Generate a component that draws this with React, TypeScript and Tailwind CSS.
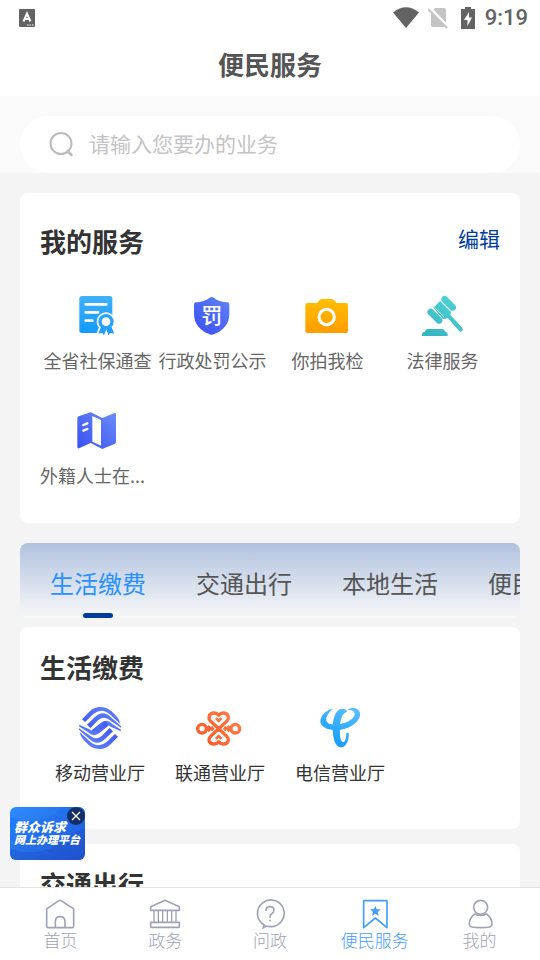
import { useState } from "react";
import type { ReactNode } from "react";

type Item = { label: string; icon: ReactNode };

const tile = "size-12 shrink-0";

const DocIcon = () => (
  <svg viewBox="0 0 144 144" className={tile}>
    <defs>
      <linearGradient id="doc" x1="0" y1="0" x2="0" y2="1">
        <stop offset="0" stopColor="#3fb0fc" />
        <stop offset="1" stopColor="#129bff" />
      </linearGradient>
    </defs>
    <rect x="16" y="12" width="99" height="111" rx="8" fill="url(#doc)" />
    <path
      d="M35 37H97M35 61H72M35 86H55"
      stroke="#fff"
      strokeWidth="8"
      strokeLinecap="round"
    />
    <circle cx="96" cy="89" r="28" fill="#fff" />
    <path d="M67 126L78 98H115L126 128Z" fill="#fff" />
    <path
      d="M82 102L73 125L84 122L90 130L97 112L103 130L109 122L121 125L111 102Z"
      fill="#1f9ffb"
    />
    <circle cx="96" cy="89" r="23" fill="#26a4fc" />
    <circle cx="96" cy="89" r="13" fill="#fff" />
  </svg>
);

const ShieldIcon = () => (
  <svg viewBox="0 0 144 144" className={tile}>
    <defs>
      <linearGradient id="shield" x1="1" y1="0" x2="0.2" y2="1">
        <stop offset="0" stopColor="#6284f8" />
        <stop offset="1" stopColor="#3b51f0" />
      </linearGradient>
    </defs>
    <path
      d="M62 17Q68 13 74 17Q91 30 115 31Q121 31 121 38V66Q121 108 74 127Q68 130 62 127Q15 108 15 66V38Q15 31 21 31Q45 30 62 17Z"
      fill="url(#shield)"
    />
    <text
      x="68"
      y="94"
      textAnchor="middle"
      fontSize="63"
      fontWeight="500"
      fill="#fff"
    >
      罚
    </text>
  </svg>
);

const CameraIcon = () => (
  <svg viewBox="0 0 144 144" className={tile}>
    <defs>
      <linearGradient id="camera" x1="0" y1="0" x2="0" y2="1">
        <stop offset="0" stopColor="#ffbf00" />
        <stop offset="1" stopColor="#ff9c00" />
      </linearGradient>
    </defs>
    <path
      d="M10 33H39L48 23Q50 21 53 21H84Q87 21 89 23L98 33H126Q132 33 132 39V117Q132 123 126 123H10Q4 123 4 117V39Q4 33 10 33Z"
      fill="url(#camera)"
    />
    <circle cx="68" cy="75" r="23" fill="none" stroke="#fff" strokeWidth="9" />
  </svg>
);

const GavelIcon = () => (
  <svg viewBox="0 0 144 144" className={tile}>
    <defs>
      <linearGradient id="gavel" gradientUnits="userSpaceOnUse" x1="100" y1="10" x2="30" y2="130">
        <stop offset="0" stopColor="#4fd3d4" />
        <stop offset="1" stopColor="#36b5c2" />
      </linearGradient>
    </defs>
    <g fill="none" stroke="url(#gavel)" strokeLinecap="round">
      <path d="M77 22L101 46M35 60L60 85" strokeWidth="20" />
      <path d="M80 62L125 112" strokeWidth="13" />
    </g>
    <path
      d="M43 47L64 26L95 57Q97 68 89 76Q81 83 71 80Z"
      fill="url(#gavel)"
    />
    <path d="M47 46L75 75M65 28L93 56" stroke="#fff" strokeWidth="2" />
    <path
      d="M9 132V126Q10 120 17 119L21 113Q23 111 26 111H70Q73 111 75 113L79 119Q86 120 86 126V132Z"
      fill="url(#gavel)"
    />
  </svg>
);

const MapIcon = () => (
  <svg viewBox="0 0 144 144" className={tile}>
    <defs>
      <linearGradient id="map" x1="1" y1="0" x2="0" y2="1">
        <stop offset="0" stopColor="#6a8cfa" />
        <stop offset="1" stopColor="#3a4ff0" />
      </linearGradient>
    </defs>
    <path
      d="M14 28L50 16L85 33L122 18Q126 17 126 22V105Q126 108 123 110L85 126L50 108L15 124Q10 125 10 120V33Q10 30 14 28Z"
      fill="url(#map)"
    />
    <path d="M55 27L81 39V116L55 104Z" fill="#fff" />
    <path
      d="M28 54L40 49M28 71L40 66"
      stroke="#fff"
      strokeWidth="7"
      strokeLinecap="round"
    />
  </svg>
);

const MobileIcon = () => (
  <svg viewBox="0 0 144 144" className={tile}>
    <defs>
      <linearGradient id="mobile" x1="1" y1="0" x2="0" y2="1">
        <stop offset="0" stopColor="#6488fb" />
        <stop offset="1" stopColor="#4054f5" />
      </linearGradient>
      <g id="wave">
        <path d="M18 46L40 23Q54 9 72 9Q92 9 107 22L124 40Q131 49 133 60L104 33Q90 20 76 20Q62 21 52 30L27 54Z" />
        <path d="M33 62L56 40Q68 28 81 28Q93 28 104 39L135 67V71L104 50Q92 40 82 41Q74 42 66 49L43 72Z" />
        <path d="M47 79L74 57Q84 49 94 51Q101 52 108 59L135 77L134 82L106 69Q98 63 91 64Q86 65 80 71L57 92Q52 88 47 79Z" />
      </g>
    </defs>
    <g fill="url(#mobile)">
      <use href="#wave" />
      <use href="#wave" transform="rotate(180 72 72)" />
    </g>
  </svg>
);

const UnicomIcon = () => (
  <svg viewBox="0 0 144 144" className={tile}>
    <defs>
      <linearGradient id="unicom" gradientUnits="userSpaceOnUse" x1="130" y1="20" x2="10" y2="120">
        <stop offset="0" stopColor="#ff8045" />
        <stop offset="1" stopColor="#fc5728" />
      </linearGradient>
    </defs>
    <g fill="none" stroke="url(#unicom)" strokeWidth="10" strokeLinejoin="round">
      <path d="M68 34Q62 26 52 27Q40 29 39 39Q38 46 44 52L92 97Q98 103 97 109Q95 119 84 120Q74 121 68 113Q62 121 52 120Q41 119 39 109Q38 103 44 97L92 52Q98 46 97 39Q96 29 84 27Q74 26 68 34Z" />
      <circle cx="18" cy="74" r="13" />
      <circle cx="118" cy="74" r="13" />
    </g>
    <g fill="url(#unicom)">
      <path d="M57 45L62 40L68 45L74 40L79 45L68 56Z" />
      <path d="M57 102L62 107L68 102L74 107L79 102L68 91Z" />
      <path d="M28 74L38 63L44 69L49 66L55 74L49 82L44 79L38 85Z" />
      <path d="M108 74L98 63L92 69L87 66L81 74L87 82L92 79L98 85Z" />
    </g>
  </svg>
);

const TelecomIcon = () => (
  <svg viewBox="0 0 144 144" className={tile}>
    <defs>
      <linearGradient id="telecom" gradientUnits="userSpaceOnUse" x1="110" y1="10" x2="50" y2="130">
        <stop offset="0" stopColor="#5abfff" />
        <stop offset="1" stopColor="#129bff" />
      </linearGradient>
    </defs>
    <g fill="url(#telecom)">
      <path d="M50 14C26 19 9 40 14 58C22 79 62 84 96 71C128 58 141 30 127 18C119 11 103 10 95 18C107 17 116 21 116 30C115 44 96 56 70 61C46 64 33 59 31 49C29 38 38 26 50 14Z" />
      <path d="M94 23C89 13 76 11 65 20C52 33 48 63 51 91C54 118 64 131 76 130C91 128 100 108 98 86H91C91 103 87 114 81 114C74 113 71 98 72 75C72 46 78 26 94 23Z" />
    </g>
  </svg>
);

const navIcon = "size-8";

const navItems: Item[] = [
  {
    label: "首页",
    icon: (
      <svg viewBox="0 0 96 96" className={navIcon} fill="none" stroke="currentColor" strokeWidth="5" strokeLinejoin="round">
        <path d="M8 35Q8 32 10 31L45 8Q48 6 51 8L87 31Q89 32 89 35V85Q89 89 85 89H12Q8 89 8 85Z" />
        <path d="M34 89V71Q34 56 48 56Q63 56 63 71V89" />
      </svg>
    ),
  },
  {
    label: "政务",
    icon: (
      <svg viewBox="0 0 96 96" className={navIcon} fill="none" stroke="currentColor" strokeWidth="5" strokeLinejoin="round">
        <path d="M5 37V26L48 7L91 26V37ZM5 73H91V88H5Z" />
        <path d="M15 37V73M28 37V73M41 37V73M55 37V73M68 37V73M81 37V73" strokeWidth="4" />
      </svg>
    ),
  },
  {
    label: "问政",
    icon: (
      <svg viewBox="0 0 96 96" className={navIcon} fill="none" stroke="currentColor" strokeWidth="5" strokeLinejoin="round" strokeLinecap="round">
        <path d="M31 81A40 40 0 1 1 48 86L36 84L27 90Z" />
        <path d="M36 37Q36 26 48 26Q60 26 60 37Q60 43 53 47Q48 50 48 56V58M48 67V68" />
      </svg>
    ),
  },
  {
    label: "便民服务",
    icon: (
      <svg viewBox="0 0 96 96" className={navIcon} fill="none" stroke="currentColor" strokeWidth="5" strokeLinejoin="round">
        <path d="M14 8H84V89L49 60L14 89Z" />
        <path
          d="M49 23L53 34H65L56 42L59 54L49 47L39 54L42 42L33 34H45Z"
          fill="currentColor"
          stroke="none"
        />
      </svg>
    ),
  },
  {
    label: "我的",
    icon: (
      <svg viewBox="0 0 96 96" className={navIcon} fill="none" stroke="currentColor" strokeWidth="5" strokeLinejoin="round">
        <circle cx="50" cy="28" r="21" />
        <path d="M33 48Q16 58 16 80Q16 89 50 89Q84 89 84 80Q84 58 67 48Q50 57 33 48Z" />
      </svg>
    ),
  },
];

const myServices: Item[] = [
  { label: "全省社保通查", icon: <DocIcon /> },
  { label: "行政处罚公示", icon: <ShieldIcon /> },
  { label: "你拍我检", icon: <CameraIcon /> },
  { label: "法律服务", icon: <GavelIcon /> },
  { label: "外籍人士在...", icon: <MapIcon /> },
];

const payments: Item[] = [
  { label: "移动营业厅", icon: <MobileIcon /> },
  { label: "联通营业厅", icon: <UnicomIcon /> },
  { label: "电信营业厅", icon: <TelecomIcon /> },
];

const tabs = ["生活缴费", "交通出行", "本地生活", "便民服务"];

const StatusBar = () => (
  <div className="flex h-9 items-center justify-between pl-[19px] pr-3 text-[#636363]">
    <svg viewBox="0 0 16 18" className="h-[18px] w-4">
      <rect width="16" height="18" rx="1" fill="currentColor" />
      <path
        d="M4.500 12.500L8 4.500L11.500 12.500M6 10H10"
        fill="none"
        stroke="#fff"
        strokeWidth="2"
      />
      <path d="M8 16H15" stroke="#fff" strokeWidth="1" strokeDasharray="1.500 1" />
    </svg>
    <div className="flex items-center">
      <svg viewBox="0 0 26 22" className="mr-[9px] h-[22px] w-[26px]">
        <path d="M0 5.500Q13-5 26 5.500L13 21Z" fill="currentColor" />
      </svg>
      <svg viewBox="0 0 20 22" className="mr-[13px] h-[22px] w-5">
        <path d="M7 1H16Q18 1 18 3V18Q18 20 16 20H5Q3 20 3 18V5Z" fill="#c4c4c4" />
        <path d="M1 0L20 20" stroke="#fff" strokeWidth="3" />
        <path d="M0 2L19 21" stroke="#c4c4c4" strokeWidth="2" />
      </svg>
      <svg viewBox="0 0 14 22" className="mr-2.5 h-[22px] w-3.5">
        <path d="M4 0H10V2H14V22H0V2H4Z" fill="currentColor" />
        <path d="M8 5L3 13H6.500V19L11 10.500H8Z" fill="#fff" />
      </svg>
      <span className="font-['Roboto',sans-serif] text-[22px] font-medium leading-9">
        9:19
      </span>
    </div>
  </div>
);

export default function App() {
  const [activeTab, setActiveTab] = useState(tabs[0]);
  const [showBanner, setShowBanner] = useState(true);

  return (
    <div className="relative flex h-screen flex-col overflow-hidden bg-[#f4f4f4] font-['Noto_Sans_CJK_SC',sans-serif] text-[#333]">
      <header className="shrink-0 bg-white">
        <StatusBar />
        <h1 className="h-15 text-center text-[26px] font-bold leading-14 text-[#555]">
          便民服务
        </h1>
      </header>

      <div className="shrink-0 bg-[#fafafa] px-5 pt-5">
        <label className="flex h-[57px] items-center gap-[15px] rounded-full bg-white pl-[29px] pr-6">
          <svg viewBox="0 0 25 25" className="size-[25px] shrink-0" fill="none" stroke="#bbb" strokeWidth="2">
            <circle cx="12" cy="11.500" r="10.500" />
            <path d="M18.500 19L22.500 23" strokeWidth="2.500" strokeLinecap="round" />
          </svg>
          <input
            type="text"
            aria-label="搜索"
            placeholder="请输入您要办的业务"
            className="min-w-0 flex-1 bg-transparent pb-0.5 text-[21px] outline-none placeholder:text-[#c4c4c4]"
          />
        </label>
      </div>

      <main className="min-h-0 flex-1 overflow-y-auto px-5 pt-5 [scrollbar-width:none]">
        <section className="rounded-lg bg-white px-5 pb-px pt-7">
          <div className="flex items-center justify-between">
            <h2 className="text-[26px] font-bold leading-10">我的服务</h2>
            <button className="pb-1 text-[21px] text-[#003e9a]">编辑</button>
          </div>
          <div className="grid grid-cols-4 pt-[31px]">
            {myServices.map((s) => (
              <a
                key={s.label}
                href="#"
                className="flex h-[115px] flex-col items-center gap-1.5 text-lg leading-7 text-[#666]"
              >
                {s.icon}
                <span
                  className={
                    s.label.endsWith("...")
                      ? "w-full truncate"
                      : "w-full truncate text-center"
                  }
                >
                  {s.label}
                </span>
              </a>
            ))}
          </div>
        </section>

        <div
          role="tablist"
          className="mt-5 flex h-[75px] overflow-x-auto rounded-lg bg-linear-to-b from-[#b1c2df] to-[#f8f8f8] pl-[5px] [scrollbar-width:none]"
        >
          {tabs.map((tab) => {
            const active = tab === activeTab;
            return (
              <button
                key={tab}
                role="tab"
                aria-selected={active}
                onClick={() => setActiveTab(tab)}
                className="flex shrink-0 flex-col items-center justify-between px-[25px] pt-5 text-2xl leading-10"
              >
                <span className={active ? "text-[#2891ff]" : "text-[#555]"}>
                  {tab}
                </span>
                {active && (
                  <span className="h-[5px] w-[30px] rounded-full bg-[#003e9a]" />
                )}
              </button>
            );
          })}
        </div>

        <section className="mt-[9px] rounded-lg bg-white px-5 pb-[43px] pt-5">
          <h2 className="text-[26px] font-bold leading-10">生活缴费</h2>
          <div className="flex flex-wrap pt-[17px]">
            {payments.map((p) => (
              <a
                key={p.label}
                href="#"
                className="flex w-30 flex-col items-center gap-1.5 text-lg leading-7"
              >
                {p.icon}
                <span>{p.label}</span>
              </a>
            ))}
          </div>
        </section>

        <section className="mt-[15px] rounded-lg bg-white px-5 pb-10 pt-5">
          <h2 className="text-[26px] font-bold leading-10">交通出行</h2>
        </section>
      </main>

      {showBanner && (
        <div className="absolute bottom-25 left-2.5 h-[53px] w-[75px] overflow-hidden rounded-md bg-linear-to-br from-[#2e8dff] to-[#2152cf]">
          <svg viewBox="0 0 75 53" className="absolute inset-0">
            <path d="M0 42Q30 50 46 38Q62 22 75 22V53H0Z" fill="#1d4cc8" opacity="0.350" />
            <path d="M0 10Q28 20 46 6L52 0H75V20Q52 36 28 37Q8 38 0 32Z" fill="#1c6cf5" opacity="0.400" />
          </svg>
          <a
            href="#"
            className="relative block whitespace-nowrap pl-1 pt-[14px] font-black italic text-white"
          >
            <span className="block text-[13px] leading-3">群众诉求</span>
            <span className="block text-[11px] leading-3">网上办理平台</span>
          </a>
          <button
            aria-label="关闭"
            onClick={() => setShowBanner(false)}
            className="absolute right-0 top-0 flex size-[18px] items-center justify-center rounded-full bg-[#152f66]"
          >
            <svg viewBox="0 0 10 10" className="size-2.5" stroke="#fff" strokeWidth="1.200">
              <path d="M1 1L9 9M9 1L1 9" />
            </svg>
          </button>
        </div>
      )}

      <nav className="flex shrink-0 border-t border-[#e4e4e4] bg-white px-2 pb-2.5 pt-2.5">
        {navItems.map((n) => (
          <a
            key={n.label}
            href="#"
            className={
              n.label === "便民服务"
                ? "flex flex-1 flex-col items-center text-[17px] font-light leading-5 text-[#429ef8]"
                : "flex flex-1 flex-col items-center text-[17px] font-light leading-5 text-[#a0a3b5]"
            }
          >
            {n.icon}
            {n.label}
          </a>
        ))}
      </nav>
    </div>
  );
}
